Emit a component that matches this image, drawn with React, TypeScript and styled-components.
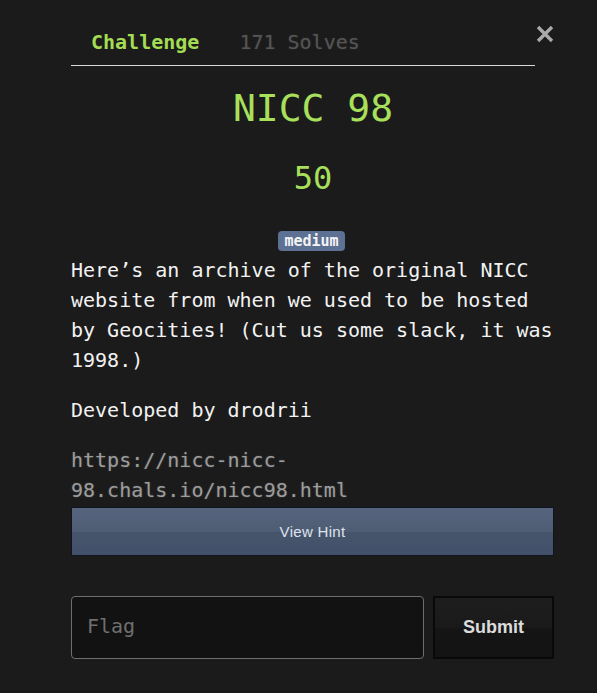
import styled, { createGlobalStyle } from 'styled-components';

const GlobalStyle = createGlobalStyle`
  body {
    margin: 0;
    background: #1b1b1b;
    font-family: 'DejaVu Sans Mono', 'Liberation Mono', monospace;
  }
`;

const Modal = styled.div`
  padding: 0 42px 0 71px;
`;

const Header = styled.div`
  display: flex;
  align-items: flex-start;
  padding-top: 20px;
`;

const Tabs = styled.nav`
  display: flex;
  flex-shrink: 0;
  width: 464px;
  border-bottom: 1px solid #d8d8d8;
`;

const Tab = styled.span<{ $active?: boolean }>`
  padding: 10px 20px 11px;
  font-size: 20px;
  line-height: 24px;
  color: ${(p) => (p.$active ? '#a4dc54' : '#555')};
  font-weight: ${(p) => (p.$active ? 'bold' : 'normal')};
  text-shadow: ${(p) => (p.$active ? 'none' : '0 0 2px #333')};
`;

const Close = styled.button`
  margin-top: 2px;
  width: 20px;
  height: 24px;
  padding: 0;
  background: none;
  border: none;
  display: flex;
  align-items: center;
  justify-content: center;
`;

const Title = styled.h2`
  margin: 19px 0 0;
  text-align: center;
  font-size: 38px;
  line-height: 46px;
  font-weight: normal;
  color: #a8e05c;
`;

const Points = styled.h3`
  margin: 27px 0 0;
  text-align: center;
  font-size: 32px;
  line-height: 40px;
  font-weight: normal;
  color: #a8e05c;
`;

const BadgeRow = styled.div`
  margin-top: 33px;
  display: flex;
  justify-content: center;
  padding-right: 3px;
`;

const Badge = styled.span`
  background: #5c7193;
  color: #f4f4f4;
  font-weight: bold;
  font-size: 15px;
  line-height: 20px;
  padding: 0 6px;
  border-radius: 4px;
`;

const Description = styled.p`
  margin: 4px 0 0;
  font-size: 20px;
  line-height: 30px;
  color: #f2f2f2;
`;

const Paragraph = styled.p`
  margin: 20px 0 0;
  font-size: 20px;
  line-height: 30px;
  color: #f2f2f2;
`;

const Link = styled.a`
  display: block;
  margin-top: 20px;
  font-size: 20px;
  line-height: 30px;
  color: #9c9c9c;
  text-decoration: none;
  text-shadow: 0 0 2px #444;
`;

const HintButton = styled.button`
  display: block;
  width: 483px;
  height: 49px;
  margin-top: 2px;
  border: 1px solid #0f1520;
  background: linear-gradient(#56657d 0%, #4e5c74 50%, #46546b 51%, #43506a 100%);
  color: #dde3ec;
  font-family: 'Liberation Sans', Arial, sans-serif;
  font-size: 15px;
  letter-spacing: 0.3px;
`;

const FlagRow = styled.form`
  display: flex;
  gap: 9px;
  margin-top: 40px;
`;

const FlagInput = styled.input`
  flex: 0 0 353px;
  box-sizing: border-box;
  height: 63px;
  border: 1px solid #6e6e6e;
  border-radius: 4px;
  background: #121212;
  padding: 0 15px 4px;
  font-family: 'DejaVu Sans Mono', monospace;
  font-size: 20px;
  color: #ddd;
  &::placeholder {
    color: #6f6f6f;
  }
`;

const SubmitButton = styled.button`
  box-sizing: border-box;
  width: 121px;
  height: 63px;
  border: 2px solid #090909;
  background: linear-gradient(#1e1e1e 0%, #1a1a1a 50%, #151515 51%, #131313 100%);
  color: #dcdcdc;
  font-family: 'Liberation Sans', Arial, sans-serif;
  font-weight: bold;
  font-size: 18px;
`;

function App() {
  return (
    <Modal>
      <GlobalStyle />
      <Header>
        <Tabs>
          <Tab $active>Challenge</Tab>
          <Tab>171 Solves</Tab>
        </Tabs>
        <Close aria-label="Close">
          <svg width="18" height="18" viewBox="0 0 18 18">
            <path d="M2 2L16 16M16 2L2 16" stroke="#a9a9a9" strokeWidth="3.4" />
          </svg>
        </Close>
      </Header>
      <Title>NICC 98</Title>
      <Points>50</Points>
      <BadgeRow>
        <Badge>medium</Badge>
      </BadgeRow>
      <Description>
        Here’s an archive of the original NICC website from when we used to be hosted by
        Geocities! (Cut us some slack, it was 1998.)
      </Description>
      <Paragraph>Developed by drodrii</Paragraph>
      <Link href="#">https://nicc-nicc-98.chals.io/nicc98.html</Link>
      <HintButton>View Hint</HintButton>
      <FlagRow onSubmit={(e) => e.preventDefault()}>
        <FlagInput placeholder="Flag" />
        <SubmitButton type="submit">Submit</SubmitButton>
      </FlagRow>
    </Modal>
  );
}

export default App;
